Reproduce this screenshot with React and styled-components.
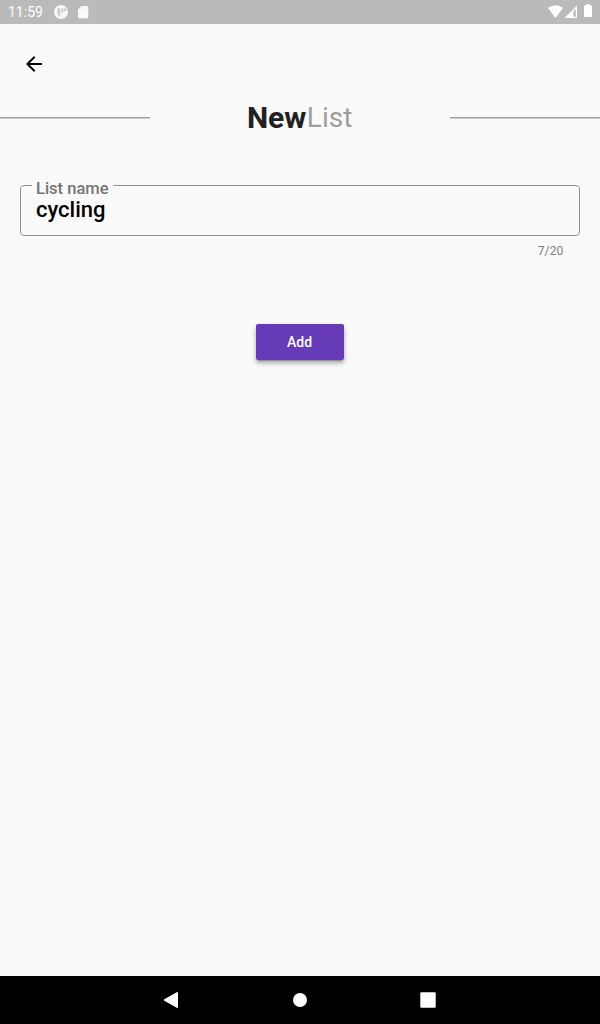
import React from "react";
import styled, { createGlobalStyle } from "styled-components";

const GlobalStyle = createGlobalStyle`
  * { box-sizing: border-box; }
  body { margin: 0; font-family: Roboto, sans-serif; background: #fafafa; }
`;

const Screen = styled.div`
  display: flex;
  flex-direction: column;
  width: 600px;
  height: 1024px;
  background: #fafafa;
`;

const StatusBar = styled.header`
  display: flex;
  justify-content: space-between;
  height: 24px;
  background: #bababa;
  color: #fff;
`;

const StatusGroup = styled.div`
  display: flex;
  align-items: center;
`;

const Clock = styled.span`
  width: 45px;
  padding-left: 8px;
  font-size: 14px;
  line-height: 24px;
  white-space: nowrap;
`;

const Icon = styled.svg`
  display: block;
  flex: none;
`;

const Content = styled.main`
  flex: 1;
  display: flex;
  flex-direction: column;
`;

const BackButton = styled.button`
  width: 48px;
  height: 48px;
  margin: 16px 0 0 10px;
  padding: 12px;
  border: 0;
  background: none;
`;

const TitleRow = styled.div`
  display: grid;
  grid-template-columns: 150px 1fr 150px;
  align-items: center;
  height: 36px;
  margin-top: 12px;
`;

const Rule = styled.div`
  height: 2px;
  margin-top: -1px;
  background: linear-gradient(#9e9e9e 50%, #cccccc 50%);
`;

const Title = styled.h1`
  display: flex;
  justify-content: center;
  align-items: center;
  margin: 0;
  line-height: 36px;
  font-size: 28px;
  font-weight: 400;
  color: #9e9e9e;
`;

const Strong = styled.span`
  margin: 0 0.5px 0 -0.8px;
  font-size: 30px;
  font-weight: 700;
  color: #212121;
`;

const Field = styled.fieldset`
  height: 58px;
  margin: 42px 20px 0;
  padding: 0 15px;
  min-width: 0;
  border: 1px solid #919191;
  border-radius: 4px;
`;

const Label = styled.legend`
  height: 14px;
  margin-left: -4px;
  padding: 0 4px;
  font-size: 16.5px;
  line-height: 22px;
  font-weight: 500;
  color: #757575;
  white-space: nowrap;
`;

const Input = styled.input`
  display: block;
  width: 100%;
  height: 30px;
  margin-top: 2px;
  padding: 0;
  border: 0;
  outline: 0;
  background: none;
  font: 500 22px/26px Roboto, sans-serif;
  color: #000;
`;

const Counter = styled.div`
  align-self: flex-end;
  margin: 8px 36.5px 0 0;
  font-size: 12px;
  line-height: 14px;
  letter-spacing: 0.15px;
  color: #7c7c7c;
`;

const AddButton = styled.button`
  align-self: center;
  width: 88px;
  height: 36px;
  margin-top: 66px;
  padding: 0 1px 0 0;
  border: 0;
  border-radius: 2px;
  background: #673ab7;
  color: #fff;
  font: 500 14px/36px Roboto, sans-serif;
  box-shadow: 0 3px 1px -2px rgba(0, 0, 0, 0.2), 0 3px 4px rgba(0, 0, 0, 0.22),
    0 3px 6px rgba(0, 0, 0, 0.12);
`;

const NavBar = styled.nav`
  height: 48px;
  display: flex;
  justify-content: center;
  gap: 80px;
  background: #000;
`;

export default function App() {
  return (
    <Screen>
      <GlobalStyle />
      <StatusBar>
        <StatusGroup>
          <Clock>11:59</Clock>
          <Icon width="50" height="24" viewBox="45 0 50 24">
            <circle cx="61" cy="12" r="7" fill="#fff" opacity=".9" />
            <path d="M57.3 8.2h3v8.3q-3-.6-3-3.4z" fill="#bababa" opacity=".7" />
            <path d="M61.5 8.2h1.5v4.5h-1.5z" fill="#bababa" opacity=".8" />
            <circle cx="65" cy="9.8" r="1.5" fill="#bababa" opacity=".7" />
            <path d="M81.5 6H87q1.3 0 1.3 1.3v9.6q0 1.3-1.3 1.3h-7.7q-1.3 0-1.3-1.3V9.6z" fill="#fff" opacity=".93" />
            <path d="M82 7.5v1.5M84 7.5v1.5M86 7.5v1.5" stroke="#bababa" strokeWidth=".7" opacity=".4" />
          </Icon>
        </StatusGroup>
        <Icon width="60" height="24" viewBox="540 0 60 24" fill="#fff">
          <path d="M548 8q7.5-5.5 15 0L555.5 18z" />
          <path d="M577 5.5v12.5h-12.5zM575.8 9l-2.300 2.300v5.500h2.300z" fillRule="evenodd" />
          <path d="M586.5 4h3v1.3h1.5q1 0 1 1V16q0 1-1 1h-6q-1 0-1-1V6.3q0-1 1-1h1.5z" />
        </Icon>
      </StatusBar>
      <Content>
        <BackButton aria-label="Back">
          <Icon width="24" height="24" viewBox="0 0 24 24">
            <path d="M20 11H7.83l5.59-5.59L12 4l-8 8 8 8 1.41-1.41L7.83 13H20v-2z" />
          </Icon>
        </BackButton>
        <TitleRow>
          <Rule />
          <Title>
            <Strong>New</Strong>List
          </Title>
          <Rule />
        </TitleRow>
        <Field>
          <Label>List name</Label>
          <Input aria-label="List name" defaultValue="cycling" />
        </Field>
        <Counter>7/20</Counter>
        <AddButton>Add</AddButton>
      </Content>
      <NavBar>
        <Icon width="48" height="48" viewBox="0 0 48 48" fill="#fff">
          <path d="M30 16.5v15q0 .8-.8.5L16.3 24.7q-1-.7 0-1.4L29.2 16q.8-.3.8.5z" />
        </Icon>
        <Icon width="48" height="48" viewBox="0 0 48 48" fill="#fff">
          <circle cx="24" cy="24" r="7" />
        </Icon>
        <Icon width="48" height="48" viewBox="0 0 48 48" fill="#fff">
          <rect x="16.3" y="16.3" width="15.4" height="15.4" rx="1" />
        </Icon>
      </NavBar>
    </Screen>
  );
}
